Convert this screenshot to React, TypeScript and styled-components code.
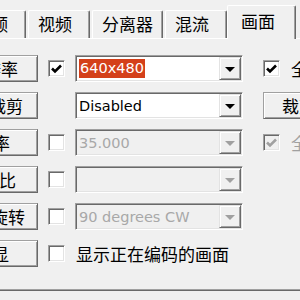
import styled, { createGlobalStyle } from "styled-components";

const cjk = `"Noto Sans CJK SC", "Noto Sans", sans-serif`;
const latin = `"DejaVu Sans", "Noto Sans CJK SC", sans-serif`;

const GlobalStyle = createGlobalStyle`
  html, body {
    margin: 0;
    padding: 0;
    background: #f0f0f0;
    overflow: hidden;
  }
`;

type Row = {
  label: string;
  end: number;
  check?: "on" | "off" | "none";
  value?: string;
  highlight?: boolean;
  disabled?: boolean;
  right?: "check" | "checkOff" | "button";
  text?: string;
};

const rows: Row[] = [
  { label: "分辨率", end: 19, check: "on", value: "640x480", highlight: true, right: "check" },
  { label: "裁剪", end: 14, check: "none", value: "Disabled", right: "button" },
  { label: "帧率", end: 27, check: "off", value: "35.000", disabled: true, right: "checkOff" },
  { label: "宽高比", end: 21, check: "off", value: "", disabled: true },
  { label: "旋转", end: 12, check: "off", value: "90 degrees CW", disabled: true },
  { label: "屏显", end: 28, check: "off", text: "显示正在编码的画面" },
];

const tabs = [
  { name: "音频", w: 62 },
  { name: "视频", w: 62 },
  { name: "分离器", w: 71 },
  { name: "混流", w: 62 },
  { name: "画面", w: 69, sel: true },
];

export default function App() {
  return (
    <>
      <GlobalStyle />
      <Dialog>
        <TabStrip>
          {tabs.map((t) => (
            <Tab key={t.name} $w={t.w} $sel={t.sel}>
              {t.name}
            </Tab>
          ))}
        </TabStrip>
        <Panel>
          {rows.map((r) => (
            <RowBox key={r.label}>
              <PushButton $w={98} $end={r.end}>
                {r.label}
              </PushButton>
              {r.check === "none" ? (
                <CheckGap />
              ) : (
                <Check>{r.check === "on" && <CheckMark />}</Check>
              )}
              {r.text !== undefined ? (
                <Label>{r.text}</Label>
              ) : (
                <Combo $disabled={r.disabled}>
                  <ComboText $disabled={r.disabled}>
                    {r.highlight ? <Selected>{r.value}</Selected> : r.value}
                  </ComboText>
                  <DropBtn>
                    <Arrow $disabled={r.disabled} />
                  </DropBtn>
                </Combo>
              )}
              {r.right === "check" && (
                <>
                  <Check>
                    <CheckMark />
                  </Check>
                  <Label>全屏预览</Label>
                </>
              )}
              {r.right === "checkOff" && (
                <>
                  <Check $disabled>
                    <CheckMark $grey />
                  </Check>
                  <Label $grey>全屏预览</Label>
                </>
              )}
              {r.right === "button" && <SideButton>裁剪设置</SideButton>}
            </RowBox>
          ))}
        </Panel>
      </Dialog>
    </>
  );
}

function CheckMark({ $grey }: { $grey?: boolean }) {
  return (
    <svg width="13" height="13" viewBox="0 0 13 13">
      <path
        d="M2 6.5 L5 9.5 L11 3.5"
        fill="none"
        stroke={$grey ? "#a0a0a0" : "#000"}
        strokeWidth="2.6"
      />
    </svg>
  );
}

const Dialog = styled.div`
  width: 300px;
  height: 300px;
  overflow: hidden;
  font-family: ${cjk};
  font-size: 17px;
  color: #000;
  background: #f0f0f0;
`;

const TabStrip = styled.div`
  display: flex;
  align-items: flex-end;
  height: 38px;
  margin-left: -36px;
`;

const Tab = styled.div<{ $w: number; $sel?: boolean }>`
  position: relative;
  z-index: ${(p) => (p.$sel ? 1 : 0)};
  flex-shrink: 0;
  box-sizing: border-box;
  width: ${(p) => p.$w}px;
  height: ${(p) => (p.$sel ? 34 : 28)}px;
  margin: ${(p) => (p.$sel ? "0 0 -1px -2px" : "0 2px 0 0")};
  padding-left: ${(p) => (p.$sel ? 13 : 9)}px;
  line-height: ${(p) => (p.$sel ? 30 : 26)}px;
  border-top: 1px solid #fff;
  border-left: 1px solid #fff;
  border-right: 1px solid #696969;
  box-shadow: inset -1px 0 #a0a0a0;
  border-radius: 2px 2px 0 0;
  background: #f0f0f0;
  white-space: nowrap;
`;

const Panel = styled.div`
  box-sizing: border-box;
  width: 360px;
  height: 253px;
  margin-left: -60px;
  padding-top: 16px;
  border-top: 1px solid #fff;
  border-bottom: 1px solid #696969;
  box-shadow: inset 0 -1px #a0a0a0;
  display: flex;
  flex-direction: column;
  gap: 10px;
`;

const RowBox = styled.div`
  display: flex;
  align-items: center;
  height: 27px;
`;

const PushButton = styled.div<{ $w: number; $end: number }>`
  flex-shrink: 0;
  box-sizing: border-box;
  width: ${(p) => p.$w}px;
  height: 27px;
  margin-right: 10px;
  padding-right: ${(p) => p.$end}px;
  display: flex;
  align-items: center;
  justify-content: flex-end;
  border: 1px solid;
  border-color: #a0a0a0 #696969 #696969 #a0a0a0;
  box-shadow: inset 1px 1px #fff, inset -1px -1px #a0a0a0;
  background: #f0f0f0;
  white-space: nowrap;
`;

const SideButton = styled(PushButton).attrs({ $w: 80, $end: 0 })`
  justify-content: flex-start;
  padding-left: 18px;
  margin-right: 0;
`;

const Check = styled.div<{ $disabled?: boolean }>`
  flex-shrink: 0;
  box-sizing: border-box;
  width: 17px;
  height: 17px;
  margin-right: 10px;
  display: flex;
  align-items: center;
  justify-content: center;
  border: 1px solid;
  border-color: #a0a0a0 #fff #fff #a0a0a0;
  box-shadow: inset 1px 1px #696969, inset -1px -1px #e3e3e3;
  background: ${(p) => (p.$disabled ? "#f0f0f0" : "#fff")};
`;

const CheckGap = styled.div`
  flex-shrink: 0;
  width: 27px;
`;

const Combo = styled.div<{ $disabled?: boolean }>`
  flex-shrink: 0;
  box-sizing: border-box;
  width: 168px;
  height: 27px;
  margin-right: 20px;
  padding: 1px;
  display: flex;
  border: 1px solid;
  border-color: #a0a0a0 #fff #fff #a0a0a0;
  box-shadow: inset 1px 1px #696969, inset -1px -1px #e3e3e3;
  background: ${(p) => (p.$disabled ? "#f0f0f0" : "#fff")};
`;

const ComboText = styled.div<{ $disabled?: boolean }>`
  flex: 1;
  display: flex;
  align-items: center;
  padding-left: 2px;
  font-family: ${latin};
  font-size: 14.5px;
  color: ${(p) => (p.$disabled ? "#a8a8a8" : "#000")};
  white-space: nowrap;
  overflow: hidden;
`;

const Selected = styled.span`
  display: inline-block;
  padding: 0 1px;
  line-height: 19px;
  background: #d4401a;
  color: #fff;
`;

const DropBtn = styled.div`
  box-sizing: border-box;
  width: 22px;
  display: flex;
  align-items: center;
  justify-content: center;
  border: 1px solid;
  border-color: #e3e3e3 #696969 #696969 #e3e3e3;
  box-shadow: inset 1px 1px #fff, inset -1px -1px #a0a0a0;
  background: #f0f0f0;
`;

const Arrow = styled.div<{ $disabled?: boolean }>`
  width: 0;
  height: 0;
  margin-top: 2px;
  border-left: 5px solid transparent;
  border-right: 5px solid transparent;
  border-top: 5px solid ${(p) => (p.$disabled ? "#a0a0a0" : "#000")};
`;

const Label = styled.div<{ $grey?: boolean }>`
  margin-left: 1px;
  white-space: nowrap;
  color: ${(p) => (p.$grey ? "#a0a0a0" : "#000")};
`;
